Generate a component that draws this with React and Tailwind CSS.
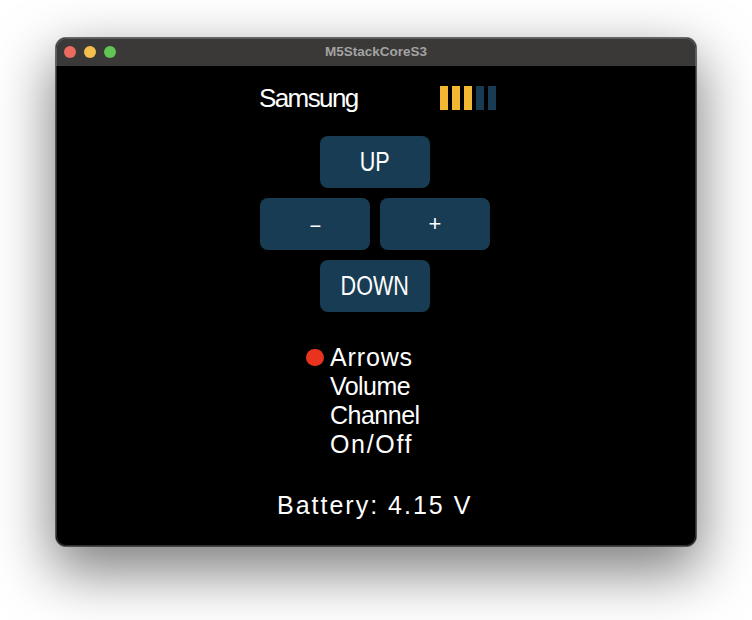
import React from "react";

const font = { fontFamily: '"Liberation Sans", Arial, sans-serif' };

function Btn({ children, className = "" }) {
  return (
    <div className={"w-[110px] h-[52px] rounded-[8px] bg-[#183c53] flex items-center justify-center text-white " + className}>
      {children}
    </div>
  );
}

export default function App() {
  return (
    <div className="w-[752px] h-[620px] bg-white pt-[38px] pl-[56px]" style={font}>
      <div className="relative w-[640px] h-[508px] rounded-[10px] overflow-hidden bg-black shadow-[0_0_0_1px_rgba(0,0,0,0.55),0_22px_56px_4px_rgba(0,0,0,0.5)]">
        {/* title bar */}
        <div className="relative h-[28px] bg-[#3a3937] flex items-center justify-center">
          <div className="absolute left-[8px] top-[8px] flex gap-[8px]">
            <div className="w-[12px] h-[12px] rounded-full bg-[#ed6a5e]" />
            <div className="w-[12px] h-[12px] rounded-full bg-[#f5bf4f]" />
            <div className="w-[12px] h-[12px] rounded-full bg-[#61c554]" />
          </div>
          <span className="text-[13.5px] font-bold text-[#a3a3a3] leading-none">M5StackCoreS3</span>
        </div>
        {/* screen */}
        <div className="h-[480px] bg-black flex flex-col text-white">
          <div className="mt-[17px] h-[30px] flex items-start pl-[203px]">
            <span className="inline-block w-[100px] text-[26px] leading-[30px] tracking-[-1.6px] whitespace-nowrap">Samsung</span>
            <div className="ml-[81px] mt-[3px] flex gap-[4px]">
              <div className="w-[8px] h-[24px] bg-[#f4b731]" />
              <div className="w-[8px] h-[24px] bg-[#f4b731]" />
              <div className="w-[8px] h-[24px] bg-[#f4b731]" />
              <div className="w-[8px] h-[24px] bg-[#183c53]" />
              <div className="w-[8px] h-[24px] bg-[#183c53]" />
            </div>
          </div>
          <div className="mt-[23px] pl-[204px] flex flex-col gap-[10px] w-[434px]">
            <div className="flex justify-center">
              <Btn><span className="text-[27px] leading-[30px] scale-x-[0.8] inline-block">UP</span></Btn>
            </div>
            <div className="flex gap-[10px]">
              <Btn><span className="text-[20px] leading-[30px] scale-x-[2] translate-y-[1px] inline-block">-</span></Btn>
              <Btn><span className="text-[22px] leading-[30px] inline-block">+</span></Btn>
            </div>
            <div className="flex justify-center">
              <Btn><span className="text-[27px] leading-[30px] scale-x-[0.8] inline-block">DOWN</span></Btn>
            </div>
          </div>
          <div className="mt-[31px] pl-[250px] flex flex-col text-[25px] leading-[29px]">
            <div className="flex items-center">
              <div className="w-[18px] h-[17px] rounded-full bg-[#e8341f]" />
              <span className="ml-[6px] tracking-[0.85px]">Arrows</span>
            </div>
            <div className="pl-[24px] tracking-[-0.55px]">Volume</div>
            <div className="pl-[24px] tracking-[-0.5px]">Channel</div>
            <div className="pl-[24px] tracking-[1.67px]">On/Off</div>
          </div>
          <div className="mt-[31px] pl-[221px] text-[25px] leading-[30px] tracking-[2px]">Battery: 4.15 V</div>
        </div>
        <div className="pointer-events-none absolute inset-0 rounded-[10px] shadow-[inset_0_0_0_1px_rgba(255,255,255,0.18)]" />
      </div>
    </div>
  );
}
